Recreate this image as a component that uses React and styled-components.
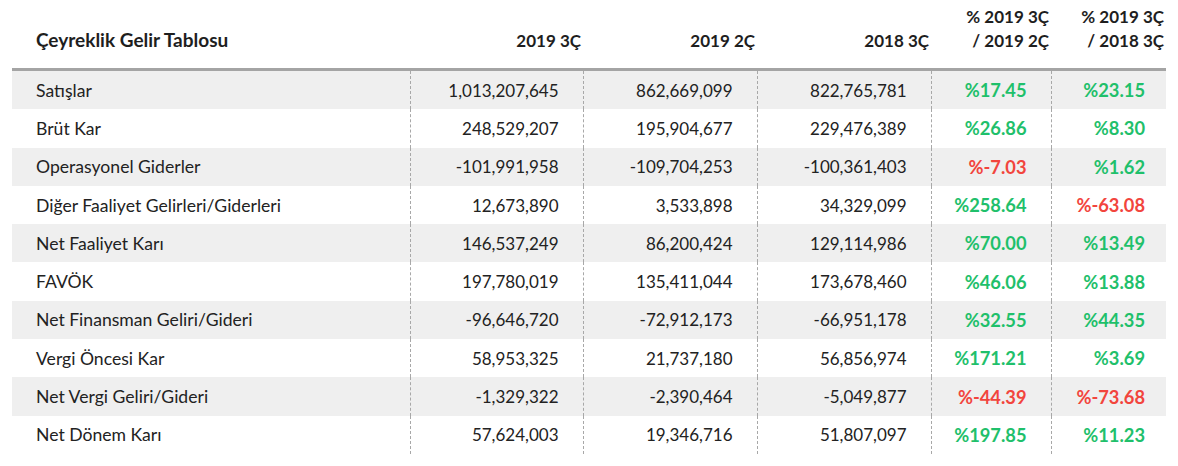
import React from 'react';
import styled, { createGlobalStyle } from 'styled-components';

const GlobalStyle = createGlobalStyle`
  body {
    margin: 0;
    background: #fff;
    font-family: Lato, "Liberation Sans", sans-serif;
    color: #222;
  }
`;

const Wrapper = styled.div`
  padding: 0 12px;
`;

const Table = styled.table`
  width: 1154px;
  border-collapse: collapse;
  table-layout: fixed;
`;

const HeadCell = styled.th`
  height: 52px;
  padding: ${p => (p.$first ? '0 0 16px 24px' : '0 2px 15px 0')};
  text-align: ${p => (p.$first ? 'left' : 'right')};
  vertical-align: bottom;
  font-size: ${p => (p.$first ? '19px' : '17px')};
  font-weight: 700;
  line-height: 24px;
  color: #1e1e1e;
  border-bottom: 3px solid #a4a4a4;
`;

const Row = styled.tr`
  background: ${p => (p.$shaded ? '#efefef' : '#fff')};
`;

const Label = styled.td`
  height: 38.3px;
  padding: 0 0 0 24px;
  font-size: 17.6px;
  white-space: nowrap;
  color: #222;
`;

const Num = styled.td`
  padding: 0 ${p => p.$pr || 24}px 0 0;
  text-align: right;
  font-size: 17px;
  color: #222;
  border-left: 1px dashed #a8a8a8;
`;

const Pct = styled(Num)`
  font-size: 18.3px;
  font-weight: 700;
  color: ${p => (p.$neg ? '#f2453d' : '#1fc06b')};
`;

const rows = [
  ['Satışlar', '1,013,207,645', '862,669,099', '822,765,781', '17.45', '23.15'],
  ['Brüt Kar', '248,529,207', '195,904,677', '229,476,389', '26.86', '8.30'],
  ['Operasyonel Giderler', '-101,991,958', '-109,704,253', '-100,361,403', '-7.03', '1.62'],
  ['Diğer Faaliyet Gelirleri/Giderleri', '12,673,890', '3,533,898', '34,329,099', '258.64', '-63.08'],
  ['Net Faaliyet Karı', '146,537,249', '86,200,424', '129,114,986', '70.00', '13.49'],
  ['FAVÖK', '197,780,019', '135,411,044', '173,678,460', '46.06', '13.88'],
  ['Net Finansman Geliri/Gideri', '-96,646,720', '-72,912,173', '-66,951,178', '32.55', '44.35'],
  ['Vergi Öncesi Kar', '58,953,325', '21,737,180', '56,856,974', '171.21', '3.69'],
  ['Net Vergi Geliri/Gideri', '-1,329,322', '-2,390,464', '-5,049,877', '-44.39', '-73.68'],
  ['Net Dönem Karı', '57,624,003', '19,346,716', '51,807,097', '197.85', '11.23'],
];

export default function App() {
  return (
    <Wrapper>
      <GlobalStyle />
      <Table>
        <colgroup>
          <col style={{ width: 398 }} />
          <col style={{ width: 173 }} />
          <col style={{ width: 174 }} />
          <col style={{ width: 174 }} />
          <col style={{ width: 120 }} />
          <col style={{ width: 115 }} />
        </colgroup>
        <thead>
          <tr>
            <HeadCell $first>Çeyreklik Gelir Tablosu</HeadCell>
            <HeadCell>2019 3Ç</HeadCell>
            <HeadCell>2019 2Ç</HeadCell>
            <HeadCell>2018 3Ç</HeadCell>
            <HeadCell>% 2019 3Ç<br />/ 2019 2Ç</HeadCell>
            <HeadCell>% 2019 3Ç<br />/ 2018 3Ç</HeadCell>
          </tr>
        </thead>
        <tbody>
          {rows.map((r, i) => (
            <Row key={r[0]} $shaded={i % 2 === 0}>
              <Label>{r[0]}</Label>
              <Num>{r[1]}</Num>
              <Num>{r[2]}</Num>
              <Num>{r[3]}</Num>
              <Pct $neg={r[4].startsWith('-')}>%{r[4]}</Pct>
              <Pct $neg={r[5].startsWith('-')} $pr={21}>%{r[5]}</Pct>
            </Row>
          ))}
        </tbody>
      </Table>
    </Wrapper>
  );
}
